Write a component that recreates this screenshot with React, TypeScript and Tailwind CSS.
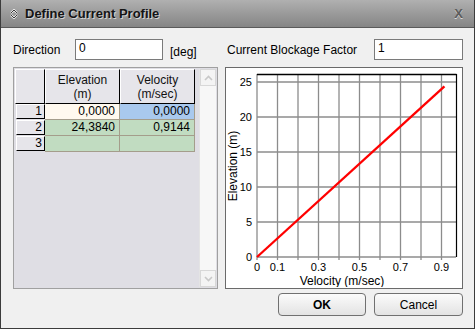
const font = { fontFamily: '"Liberation Sans", Arial, sans-serif' }

const xTicks = [0, 1, 2, 3, 4, 5, 6, 7, 8, 9]
const yTicks = [0, 5, 10, 15, 20, 25]
const xLabels = ['0', '0.1', '', '0.3', '', '0.5', '', '0.7', '', '0.9']

function Chart() {
  const x0 = 31
  const y0 = 189
  const sx = 205
  const sy = 7
  return (
    <svg width={236} height={219} className="block" style={font}>
      {xTicks.map((k) => (
        <line key={'v' + k} x1={x0 + k * 20.5} y1={6} x2={x0 + k * 20.5} y2={y0 + 3} stroke="#8c8c8c" strokeWidth={1.3} />
      ))}
      {yTicks.map((v) => (
        <line key={'h' + v} x1={x0} y1={y0 - v * sy} x2={230} y2={y0 - v * sy} stroke="#8c8c8c" strokeWidth={1.3} />
      ))}
      <line x1={x0} y1={6.5} x2={230.5} y2={6.5} stroke="#000" strokeWidth={1.5} />
      <line x1={230.5} y1={6} x2={230.5} y2={y0} stroke="#000" strokeWidth={1.2} />
      {yTicks.map((v) => (
        <text key={'yl' + v} x={26} y={y0 - v * sy + 4} fontSize={11} textAnchor="end" fill="#000">
          {v}
        </text>
      ))}
      {xLabels.map((l, k) =>
        l ? (
          <text key={'xl' + k} x={x0 + k * 20.5} y={203} fontSize={11} textAnchor="middle" fill="#000">
            {l}
          </text>
        ) : null,
      )}
      <text x={116} y={217} fontSize={12} textAnchor="middle" fill="#000">
        Velocity (m/sec)
      </text>
      <text x={0} y={0} fontSize={12} textAnchor="middle" fill="#000" transform="translate(11 98) rotate(-90)">
        Elevation (m)
      </text>
      <line x1={x0} y1={y0} x2={x0 + 0.9144 * sx} y2={y0 - 24.384 * sy} stroke="#ff0000" strokeWidth={2.3} />
    </svg>
  )
}

function HeadCell({ children, w }: { children?: React.ReactNode; w: string }) {
  return (
    <div className={`${w} h-[35px] flex flex-col items-center justify-center bg-[#e6e5ea] border-t border-l border-t-white border-l-white border-r border-b border-r-black border-b-black text-[12px] leading-[14px] text-[#111]`}>
      {children}
    </div>
  )
}

function Row({ n, a, b, ca, cb }: { n: string; a: string; b: string; ca: string; cb: string }) {
  return (
    <div className="flex h-[16px] text-[12px] leading-[15px]">
      <div className="w-[30px] pl-px pb-px">
        <div className="h-full bg-[#e6e5ea] border-t border-l border-t-white border-l-white border-r border-b border-r-black border-b-black text-right pr-[2px] leading-[13px]">
          {n}
        </div>
      </div>
      <div className={`w-[75px] ${ca} border-r border-b border-[#a49d8b] text-right pr-[4px]`}>{a}</div>
      <div className={`w-[75px] ${cb} border-r border-b border-[#a49d8b] text-right pr-[4px]`}>{b}</div>
    </div>
  )
}

export default function App() {
  return (
    <div className="w-[475px] h-[329px] flex flex-col bg-[#f0f0f0] border-x border-b border-[#3c3c3c] text-black" style={font}>
      <div className="h-[28px] shrink-0 flex items-center bg-gradient-to-b from-[#b0b0b0] to-[#858585] border-b border-[#5a5a5a]">
        <svg width={8} height={10} className="ml-[9px] mr-[7px]">
          <path d="M1 4 L4 1 L7 4" fill="none" stroke="#f0f0f0" strokeWidth={2} />
          <path d="M1 6 L4 9 L7 6" fill="none" stroke="#f0f0f0" strokeWidth={2} />
          <path d="M1 4 L4 1 L7 4" fill="none" stroke="#3a3a3a" strokeWidth={1} />
          <path d="M1 6 L4 9 L7 6" fill="none" stroke="#3a3a3a" strokeWidth={1} />
        </svg>
        <span className="text-[13px] font-bold text-[#141414] [text-shadow:1px_1px_0_#d4d4d4]">Define Current Profile</span>
        <span className="ml-auto mr-[11px] text-[13px] font-bold text-[#5c5c5c] [text-shadow:0_1px_0_#d8d8d8]">X</span>
      </div>

      <div className="flex-1 flex flex-col pl-[12px] pr-[11px] pt-[11px]">
        <div className="flex h-[21px] text-[12px]">
          <div className="w-[205px] flex items-center">
            <span className="w-[62px]">Direction</span>
            <div className="w-[88px] h-[21px] bg-white border border-[#7a7a7a] px-[3px] leading-[17px]">0</div>
            <span className="ml-[7px] mt-[4px]">[deg]</span>
          </div>
          <div className="ml-[8px] flex-1 flex items-center">
            <span className="ml-px">Current Blockage Factor</span>
            <div className="ml-auto w-[89px] h-[21px] bg-white border border-[#7a7a7a] px-[3px] leading-[17px]">1</div>
          </div>
        </div>

        <div className="flex mt-[7px] h-[222px]">
          <div className="w-[205px] border border-[#a0a0a0] bg-[#dfdee4] flex p-px">
            <div className="flex flex-col">
              <div className="flex">
                <HeadCell w="w-[30px]" />
                <HeadCell w="w-[75px]">
                  <span>Elevation</span>
                  <span>(m)</span>
                </HeadCell>
                <HeadCell w="w-[75px]">
                  <span>Velocity</span>
                  <span>(m/sec)</span>
                </HeadCell>
              </div>
              <Row n="1" a="0,0000" b="0,0000" ca="bg-[#fff9ef]" cb="bg-[#a9c9ee]" />
              <Row n="2" a="24,3840" b="0,9144" ca="bg-[#c1dcc1]" cb="bg-[#c1dcc1]" />
              <Row n="3" a="" b="" ca="bg-[#c1dcc1]" cb="bg-[#c1dcc1]" />
            </div>
            <div className="ml-auto w-[17px] bg-[#f7f7f7] border-l border-[#e4e4e4] flex flex-col justify-between">
              <div className="h-[17px] border border-[#d8d8d8] bg-[#f4f4f4] flex items-center justify-center">
                <svg width={9} height={6}>
                  <path d="M1 5 L4.5 1.5 L8 5" fill="none" stroke="#c8c8c8" strokeWidth={1.6} />
                </svg>
              </div>
              <div className="h-[17px] border border-[#d8d8d8] bg-[#f4f4f4] flex items-center justify-center">
                <svg width={9} height={6}>
                  <path d="M1 1 L4.5 4.5 L8 1" fill="none" stroke="#c8c8c8" strokeWidth={1.6} />
                </svg>
              </div>
            </div>
          </div>

          <div className="ml-[7px] flex-1 bg-white border border-[#6a6a6a]">
            <Chart />
          </div>
        </div>

        <div className="flex justify-end gap-[8px] mt-[4px]">
          <button className="w-[88px] h-[23px] rounded-[4px] border border-[#707070] bg-gradient-to-b from-[#fbfbfb] to-[#e3e3e3] text-[12px] font-bold">
            OK
          </button>
          <button className="w-[89px] h-[23px] rounded-[4px] border border-[#707070] bg-gradient-to-b from-[#fbfbfb] to-[#e3e3e3] text-[12px]">
            Cancel
          </button>
        </div>
      </div>
    </div>
  )
}
